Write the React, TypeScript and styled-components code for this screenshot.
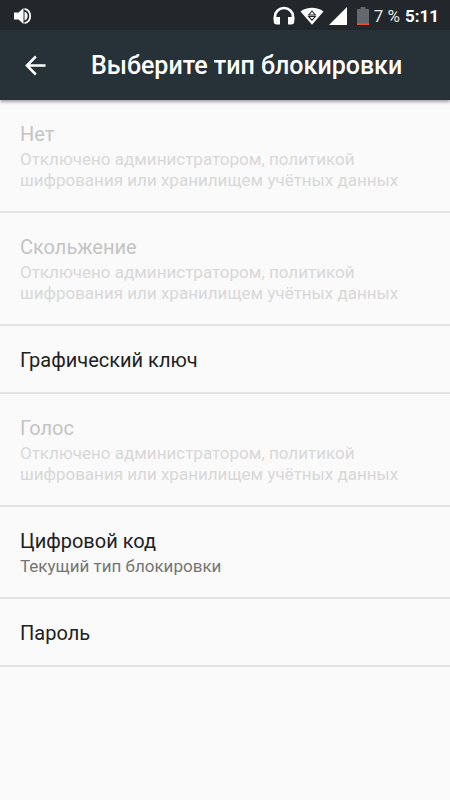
import React from "react";
import styled, { createGlobalStyle } from "styled-components";

const GlobalStyle = createGlobalStyle`
  * { box-sizing: border-box; }
  html, body, #root { height: 100%; }
  body {
    margin: 0;
    background: #fafafa;
    font-family: Roboto, "Noto Sans", sans-serif;
  }
`;

const Screen = styled.div`
  display: flex;
  flex-direction: column;
  min-height: 100%;
  background: #fafafa;
`;

const StatusBar = styled.div`
  display: flex;
  align-items: center;
  justify-content: space-between;
  height: 30px;
  padding: 1px 11px 0 13px;
  background: #22272b;
  color: #fff;

  svg { display: block; }
`;

const StatusGroup = styled.div`
  display: flex;
  align-items: center;
`;

const Icons = styled.div`
  display: flex;
  align-items: center;
  gap: 5px;
  margin-right: 5px;
`;

const StatusText = styled.span<{ $bold?: boolean }>`
  font-size: 17px;
  line-height: 24px;
  font-weight: ${(p) => (p.$bold ? 700 : 400)};
  color: ${(p) => (p.$bold ? "#fff" : "#e4e5e6")};
  margin-left: ${(p) => (p.$bold ? 5 : 0)}px;
`;

const AppBar = styled.header`
  display: flex;
  align-items: center;
  gap: 40px;
  height: 70px;
  padding: 2px 20px 0;
  background: #273238;
  color: #fff;
  box-shadow: 0 2px 3px rgba(0, 0, 0, 0.35);
  z-index: 1;
`;

const BackButton = styled.button`
  display: flex;
  padding: 0;
  border: 0;
  background: none;
  color: inherit;
  cursor: pointer;
`;

const Title = styled.h1`
  margin: 0;
  font-size: 25px;
  line-height: 30px;
  font-weight: 500;
`;

const List = styled.ul`
  margin: 0;
  padding: 0;
  list-style: none;
`;

const Item = styled.li`
  border-bottom: 2px solid #e4e4e4;
`;

const Option = styled.button`
  display: block;
  width: 100%;
  padding: 22px 20px 20px;
  border: 0;
  background: none;
  font-family: inherit;
  text-align: left;
  color: #212121;
  cursor: pointer;

  &:disabled {
    color: #c4c4c4;
    cursor: default;
  }
`;

const OptionTitle = styled.span`
  display: block;
  font-size: 20px;
  line-height: 24px;
`;

const OptionNote = styled.span`
  display: block;
  margin-top: 3px;
  font-size: 17px;
  line-height: 21px;
  color: #757575;

  ${Option}:disabled & { color: #d8d8d8; }
`;

const ADMIN_NOTE =
  "Отключено администратором, политикой шифрования или хранилищем учётных данных";

const OPTIONS: { title: string; note?: string; disabled?: boolean }[] = [
  { title: "Нет", note: ADMIN_NOTE, disabled: true },
  { title: "Скольжение", note: ADMIN_NOTE, disabled: true },
  { title: "Графический ключ" },
  { title: "Голос", note: ADMIN_NOTE, disabled: true },
  { title: "Цифровой код", note: "Текущий тип блокировки" },
  { title: "Пароль" },
];

const VolumeIcon = () => (
  <svg width="19" height="18" viewBox="0 0 19 18" fill="#fff" aria-hidden="true">
    <path d="M1 5.500h4.500L10.500 1v16l-5-4.500H1z" />
    <path d="M11.500 4.500a4.800 4.800 0 0 1 0 9z" />
    <path d="M11.500 1.800a7.400 7.400 0 0 1 0 14.400" fill="none" stroke="#fff" strokeWidth="1.800" />
  </svg>
);

const HeadphonesIcon = () => (
  <svg width="22" height="20" viewBox="0 0 22 20" aria-hidden="true">
    <path d="M2 14v-3.500a9 8.500 0 0 1 18 0V14" fill="none" stroke="#fff" strokeWidth="2.600" />
    <path d="M.7 11H7v7.500H4a3.300 3.300 0 0 1-3.300-3.300zM15 11h6.300v4.200A3.300 3.300 0 0 1 18 18.500h-3z" fill="#fff" />
  </svg>
);

const WifiIcon = () => (
  <svg width="24" height="18" viewBox="0 0 24 18" aria-hidden="true">
    <path d="M.5 4.500C7-.4 17-.4 23.500 4.500L12 17.800z" fill="#fff" />
    <path d="M12 4l3.300 4H8.700zM8.700 9.500h6.600L12 13.200z" fill="none" stroke="#22272b" strokeWidth="1.100" />
  </svg>
);

const SignalIcon = () => (
  <svg width="18" height="18" viewBox="0 0 18 18" aria-hidden="true">
    <path d="M18 0v18H0z" fill="#fff" />
  </svg>
);

const BatteryIcon = () => (
  <svg width="12" height="18" viewBox="0 0 12 18" aria-hidden="true">
    <path d="M3.500 0h5v2H12v16H0V2h3.500z" fill="#65696c" />
    <path d="M0 16.500h12V18H0z" fill="#e8532b" />
  </svg>
);

const BackIcon = () => (
  <svg width="31" height="30" viewBox="0 0 31 30" fill="none" stroke="#fff" strokeWidth="2.500" aria-hidden="true">
    <path d="M25.500 14.500H7M15.800 5.500l-8.900 9 8.900 9" />
  </svg>
);

export default function App() {
  return (
    <Screen>
      <GlobalStyle />
      <StatusBar>
        <VolumeIcon />
        <StatusGroup>
          <Icons>
            <HeadphonesIcon />
            <WifiIcon />
            <SignalIcon />
          </Icons>
          <Icons>
            <span />
            <BatteryIcon />
          </Icons>
          <StatusText>7 %</StatusText>
          <StatusText $bold>5:11</StatusText>
        </StatusGroup>
      </StatusBar>
      <AppBar>
        <BackButton type="button" aria-label="Назад">
          <BackIcon />
        </BackButton>
        <Title>Выберите тип блокировки</Title>
      </AppBar>
      <List>
        {OPTIONS.map(({ title, note, disabled }) => (
          <Item key={title}>
            <Option type="button" disabled={disabled}>
              <OptionTitle>{title}</OptionTitle>
              {note && <OptionNote>{note}</OptionNote>}
            </Option>
          </Item>
        ))}
      </List>
    </Screen>
  );
}
